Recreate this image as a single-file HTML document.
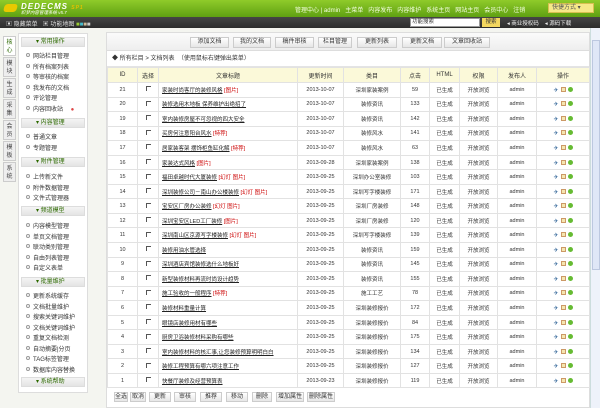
<!DOCTYPE html>
<html><head><meta charset="utf-8">
<style>
*{margin:0;padding:0;box-sizing:border-box}
body{width:600px;height:408px;overflow:hidden;background:#f4f5f0;font-family:"Liberation Sans","Noto Sans CJK SC",sans-serif;font-size:6px;color:#333;position:relative}
.a{position:absolute}
#top{left:0;top:0;width:600px;height:17px;background:linear-gradient(#8fcb2a,#5fa012)}
#bar{left:0;top:17px;width:600px;height:11px;background:linear-gradient(#454545,#2c2c2c);color:#ddd}
.nav{top:5px;color:#f4ffe0;font-size:6px;white-space:nowrap}
#tabs{left:3px;top:36px;width:13px}
.tab{width:13px;height:20px;border:1px solid #ccc;background:#eee;margin-bottom:1px;font-size:6px;line-height:8px;text-align:center;padding-top:2px;color:#444}
.tab.on{background:#fff;color:#2d6a00}
#menu{left:18px;top:33px;width:70px;height:360px;background:#fff;border:1px solid #ddd}
.mh{position:absolute;left:2px;width:64px;height:10px;background:linear-gradient(#f4f4f4,#e4e4e4);border:1px solid #ddd;color:#2d6a00;font-size:6px;line-height:8px;padding-left:14px}
.mi{position:absolute;left:7px;font-size:6px;color:#333;white-space:nowrap}
.mi:before{content:"";display:inline-block;width:2px;height:2px;border:1px solid #999;border-radius:2px;margin-right:3px;vertical-align:1px}
#main{left:106px;top:32px;width:484px;height:376px;background:#fff;border:1px solid #ddd}
#tool{left:107px;top:33px;width:482px;height:18px;background:linear-gradient(#fbfbfb,#eeeeee);border-bottom:1px solid #ddd}
.btn{position:absolute;top:37px;height:11px;background:linear-gradient(#fff,#e6e6e6);border:1px solid #ccc;font-size:6px;line-height:9px;text-align:center;color:#333}
#tt{left:107px;top:52px;width:482px;height:15px;background:#fff;border-bottom:1px solid #e4e4e4;font-size:6px;line-height:15px;padding-left:5px}
table{position:absolute;left:107px;top:67px;width:482px;border-collapse:collapse;table-layout:fixed}
td{border:1px solid #e2e2e2;height:14.55px;text-align:center;font-size:5.5px;white-space:nowrap;overflow:hidden;color:#333}
tr.h td{background:#fbf9d9;height:15px;font-size:6px}
td.t{text-align:left;padding-left:3px}
td.t u{color:#222}
.r{color:#c00}
.cb{display:inline-block;width:5px;height:5px;border-left:1px solid #555;border-top:1px solid #555}
.ic{display:inline-block;width:5px;height:5px;margin:0 1px;vertical-align:-1px}
.bb{position:absolute;top:392px;height:10px;background:linear-gradient(#fff,#e6e6e6);border:1px solid #ccc;font-size:6px;line-height:8px;text-align:center}
#sb{left:590px;top:28px;width:10px;height:380px;background:#eef2fa;border-left:1px solid #cdd}
</style></head><body>
<div class="a" id="top">
 <div class="a" style="left:4px;top:4px;width:13px;height:8px;background:#e9c900;border-radius:3px;transform:skewX(-15deg)"></div>
 <div class="a" style="left:21px;top:2px;color:#fff;font-weight:bold;font-style:italic;font-size:8px;letter-spacing:1px">DEDECMS <span style="color:#e3c000;font-size:5px">SP1</span></div>
 <div class="a" style="left:21px;top:10px;color:#fff;font-size:4.5px;font-style:italic">织梦内容管理系统 v5.7</div>
 <div class="a nav" style="left:295px">管理中心 | admin &nbsp; 主菜单 &nbsp; 内容发布 &nbsp; 内容维护 &nbsp; 系统主页 &nbsp; 网站主页 &nbsp; 会员中心 &nbsp; 注销</div>
 <div class="a" style="left:548px;top:3px;width:46px;height:10px;background:#f6e88a;border:1px solid #d7c050;color:#555;font-size:6px;line-height:8px;padding-left:3px">快捷方式 ▾</div>
</div>
<div class="a" id="bar">
 <div class="a" style="left:6px;top:2px;font-size:6px;color:#ddd">▣ 隐藏菜单 &nbsp; ▣ 功能地图 <span style="color:#9c3">■</span><span style="color:#4bc">■</span><span style="color:#cb9">■</span><span style="color:#ccc">■</span></div>
 <div class="a" style="left:410px;top:1px;width:70px;height:9px;background:#fff;border:1px solid #999;color:#333;font-size:5.5px;line-height:7px;padding-left:1px">功能搜索</div>
 <div class="a" style="left:482px;top:1px;width:18px;height:9px;background:#f3d760;color:#333;font-size:5.5px;line-height:9px;text-align:center">搜索</div>
 <div class="a" style="left:507px;top:2px;font-size:5.5px;color:#eee">◂ 商业授权码 &nbsp; &nbsp;◂ 源码下载</div>
</div>
<div class="a" id="tabs">
 <div class="tab on">核<br>心</div><div class="tab">模<br>块</div><div class="tab">生<br>成</div><div class="tab">采<br>集</div><div class="tab">会<br>员</div><div class="tab">模<br>板</div><div class="tab">系<br>统</div>
</div>
<div class="a" id="menu">
 <div class="mh" style="top:3px">▾ 常用操作</div>
 <div class="mi" style="top:17px">网站栏目管理</div><div class="mi" style="top:27.5px">所有档案列表</div><div class="mi" style="top:38px">等审核的档案</div><div class="mi" style="top:48.5px">我发布的文档</div><div class="mi" style="top:59px">评论管理</div><div class="mi" style="top:69.5px">内容回收站 <span style="color:#d44;margin-left:6px">●</span></div>
 <div class="mh" style="top:84px">▾ 内容管理</div>
 <div class="mi" style="top:98px">普通文章</div><div class="mi" style="top:108.5px">专题管理</div>
 <div class="mh" style="top:123px">▾ 附件管理</div>
 <div class="mi" style="top:138px">上传新文件</div><div class="mi" style="top:148.5px">附件数据管理</div><div class="mi" style="top:159px">文件式管理器</div>
 <div class="mh" style="top:172px">▾ 频道模型</div>
 <div class="mi" style="top:187px">内容模型管理</div><div class="mi" style="top:197.5px">单页文档管理</div><div class="mi" style="top:208px">联动类别管理</div><div class="mi" style="top:218.5px">自由列表管理</div><div class="mi" style="top:229px">自定义表单</div>
 <div class="mh" style="top:243px">▾ 批量维护</div>
 <div class="mi" style="top:257px">更新系统缓存</div><div class="mi" style="top:267.5px">文档批量维护</div><div class="mi" style="top:278px">搜索关键词维护</div><div class="mi" style="top:288.5px">文档关键词维护</div><div class="mi" style="top:299px">重复文档检测</div><div class="mi" style="top:309.5px">自动摘要|分页</div><div class="mi" style="top:320px">TAG标签管理</div><div class="mi" style="top:330.5px">数据库内容替换</div>
 <div class="mh" style="top:343px">▾ 系统帮助</div>
</div>
<div class="a" id="main"></div>
<div class="a" id="tool"></div>
<div class="btn" style="left:190px;width:39px">添加文档</div>
<div class="btn" style="left:233px;width:38px">我的文档</div>
<div class="btn" style="left:275px;width:39px">稿件审核</div>
<div class="btn" style="left:318px;width:34px">栏目管理</div>
<div class="btn" style="left:357px;width:40px">更新列表</div>
<div class="btn" style="left:402px;width:40px">更新文档</div>
<div class="btn" style="left:444px;width:46px">文章回收站</div>
<div class="a" id="tt">◆ 所有栏目 &gt; 文档列表 &nbsp;（使用鼠标右键弹出菜单）</div>
<table>
<colgroup><col style="width:30px"><col style="width:21px"><col style="width:139px"><col style="width:46px"><col style="width:57px"><col style="width:29px"><col style="width:30px"><col style="width:38px"><col style="width:39px"><col style="width:53px"></colgroup>
<tr class="h"><td>ID</td><td>选择</td><td>文章标题</td><td>更新时间</td><td>类目</td><td>点击</td><td>HTML</td><td>权限</td><td>发布人</td><td>操作</td></tr>
<tbody id="tb"></tbody>
</table>
<script>
var d=[[21,"家装时尚客厅的装修风格","[图片]","2013-10-07","深圳家装案例",59],
[20,"装修选用木地板 保养维护出绝招了","","2013-10-07","装修资讯",133],
[19,"室内装修房屋不可忽视的四大安全","","2013-10-07","装修资讯",142],
[18,"买房何注意阳台风水","[特荐]","2013-10-07","装修风水",141],
[17,"居家装客架 摆饰柜鱼缸化解","[特荐]","2013-10-07","装修风水",63],
[16,"家装达式风格","[图片]","2013-09-28","深圳家装案例",138],
[15,"福田卓越时代大厦装修","[幻灯 图片]","2013-09-25","深圳办公室装修",103],
[14,"深圳装修公司－南山办公楼装修","[幻灯 图片]","2013-09-25","深圳写字楼装修",171],
[13,"宝安区厂房办公装修","[幻灯 图片]","2013-09-25","深圳厂房装修",148],
[12,"深圳宝安区LED工厂装修","[图片]","2013-09-25","深圳厂房装修",120],
[11,"深圳南山区京源写字楼装修","[幻灯 图片]","2013-09-25","深圳写字楼装修",139],
[10,"装修用油水管选择","","2013-09-25","装修资讯",159],
[9,"深圳酒店宾馆装修选什么地板好","","2013-09-25","装修资讯",145],
[8,"新型装修材料再流时尚设计趋势","","2013-09-25","装修资讯",155],
[7,"施工验收的一般程序","[特荐]","2013-09-25","施工工艺",78],
[6,"装修材料重量计算","","2013-09-25","深圳装修报价",172],
[5,"眼镜店装修用材有哪些","","2013-09-25","深圳装修报价",84],
[4,"厨房卫浴装修材料采购有哪些","","2013-09-25","深圳装修报价",175],
[3,"室内装修材料的核汇事,让您装修预算明明白白","","2013-09-25","深圳装修报价",134],
[2,"装修工程预算有哪六项注意工作","","2013-09-25","深圳装修报价",127],
[1,"快餐厅装修及经营预算表","","2013-09-23","深圳装修报价",119]];
var h="";d.forEach(function(r){h+='<tr><td>'+r[0]+'</td><td><span class="cb"></span></td><td class="t"><u>'+r[1]+'</u> <span class="r">'+r[2]+'</span></td><td>'+r[3]+'</td><td>'+r[4]+'</td><td>'+r[5]+'</td><td>已生成</td><td>开放浏览</td><td>admin</td><td><span class="ic" style="color:#369;font-size:6px;width:auto">✈</span><span class="ic" style="background:#f5e6b0;border:1px solid #c96"></span><span class="ic" style="background:#6b3;border-radius:3px"></span></td></tr>'});
document.getElementById("tb").innerHTML=h;
</script>
<div class="bb" style="left:114px;width:14px">全选</div>
<div class="bb" style="left:130px;width:16px">取消</div>
<div class="bb" style="left:149px;width:22px">更新</div>
<div class="bb" style="left:174px;width:22px">审核</div>
<div class="bb" style="left:200px;width:22px">推荐</div>
<div class="bb" style="left:226px;width:22px">移动</div>
<div class="bb" style="left:252px;width:20px">删除</div>
<div class="bb" style="left:276px;width:28px">增加属性</div>
<div class="bb" style="left:307px;width:28px">删除属性</div>
<div class="a" id="sb"><div class="a" style="left:1px;top:12px;width:8px;height:230px;background:#dfe7f7;border:1px solid #bcc8e0"></div></div>
</body></html>
